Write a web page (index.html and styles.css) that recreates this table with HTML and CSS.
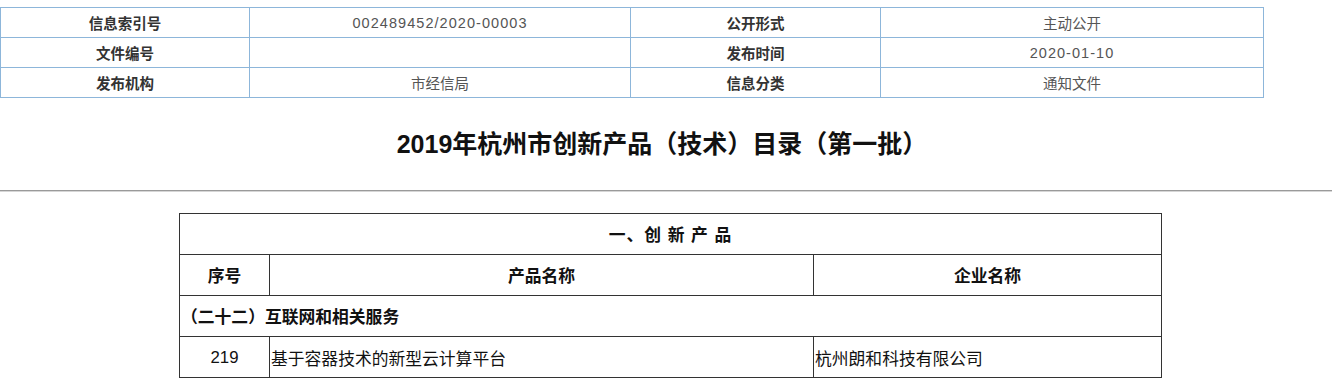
FILE: index.html
```html
<!DOCTYPE html>
<html lang="zh-CN">
<head>
<meta charset="utf-8">
<title>2019年杭州市创新产品（技术）目录（第一批）</title>
<link rel="stylesheet" href="styles.css">
</head>
<body>
  <table class="meta">
    <colgroup>
      <col class="meta-c1"><col class="meta-c2"><col class="meta-c3"><col class="meta-c4">
    </colgroup>
    <tr>
      <th>信息索引号</th><td class="code">002489452/2020-00003</td>
      <th>公开形式</th><td>主动公开</td>
    </tr>
    <tr>
      <th>文件编号</th><td></td>
      <th>发布时间</th><td class="code">2020-01-10</td>
    </tr>
    <tr>
      <th>发布机构</th><td>市经信局</td>
      <th>信息分类</th><td>通知文件</td>
    </tr>
  </table>

  <div class="headline">
    <h1 class="headline-text">2019年杭州市创新产品（技术）目录（第一批）</h1>
  </div>
  <div class="rule"></div>

  <table class="list">
    <colgroup>
      <col class="list-c1"><col class="list-c2"><col class="list-c3">
    </colgroup>
    <tr>
      <th colspan="3" class="section">一、创 新 产 品</th>
    </tr>
    <tr>
      <th>序号</th><th>产品名称</th><th>企业名称</th>
    </tr>
    <tr>
      <th colspan="3" class="group">（二十二）互联网和相关服务</th>
    </tr>
    <tr>
      <td class="num">219</td>
      <td class="txt">基于容器技术的新型云计算平台</td>
      <td class="txt">杭州朗和科技有限公司</td>
    </tr>
  </table>
</body>
</html>
```

FILE: styles.css
```css
html, body {
  margin: 0;
  padding: 0;
  background: #fff;
}

body {
  font-family: "Liberation Sans", "Noto Sans CJK SC", sans-serif;
  color: #333;
}

/* document info table */
.meta {
  margin-top: 7px;
  width: 1263px;
  border-collapse: collapse;
  table-layout: fixed;
  font-size: 14.5px;
}
.meta-c1 { width: 249px; }
.meta-c2 { width: 381px; }
.meta-c3 { width: 250px; }
.meta-c4 { width: 383px; }

.meta th,
.meta td {
  border: 1px solid #8db6da;
  height: 29px;
  padding: 0;
  text-align: center;
  vertical-align: middle;
}
.meta th {
  font-weight: bold;
  color: #333;
}
.meta td {
  font-weight: normal;
  color: #555;
}
.meta .code {
  letter-spacing: 1.05px;
}

/* document title */
.headline {
  height: 92px;
  box-sizing: border-box;
  padding: 0 8px 4px 0;
  display: flex;
  align-items: center;
  justify-content: center;
}
.headline-text {
  margin: 0;
  font-size: 25px;
  font-weight: bold;
  color: #111;
}

.rule {
  height: 1px;
  background: #9a9a9a;
  border-bottom: 1px solid #d6d6d6;
}

/* product catalogue table */
.list {
  margin: 21px 0 0 179px;
  width: 982px;
  border-collapse: collapse;
  table-layout: fixed;
  font-size: 16.8px;
  color: #111;
}
.list-c1 { width: 90px; }
.list-c2 { width: 544px; }
.list-c3 { width: 348px; }

.list th,
.list td {
  border: 1px solid #333;
  height: 40px;
  padding: 0;
  vertical-align: middle;
}
.list th {
  font-weight: bold;
  text-align: center;
}
.list .section {
  letter-spacing: 1px;
}
.list .group {
  text-align: left;
  padding-left: 1px;
}
.list .num,
.list .txt {
  height: 38px;
  padding-top: 2px;
}
.list .num {
  text-align: center;
}
.list .txt {
  text-align: left;
  padding-left: 1px;
}
```
